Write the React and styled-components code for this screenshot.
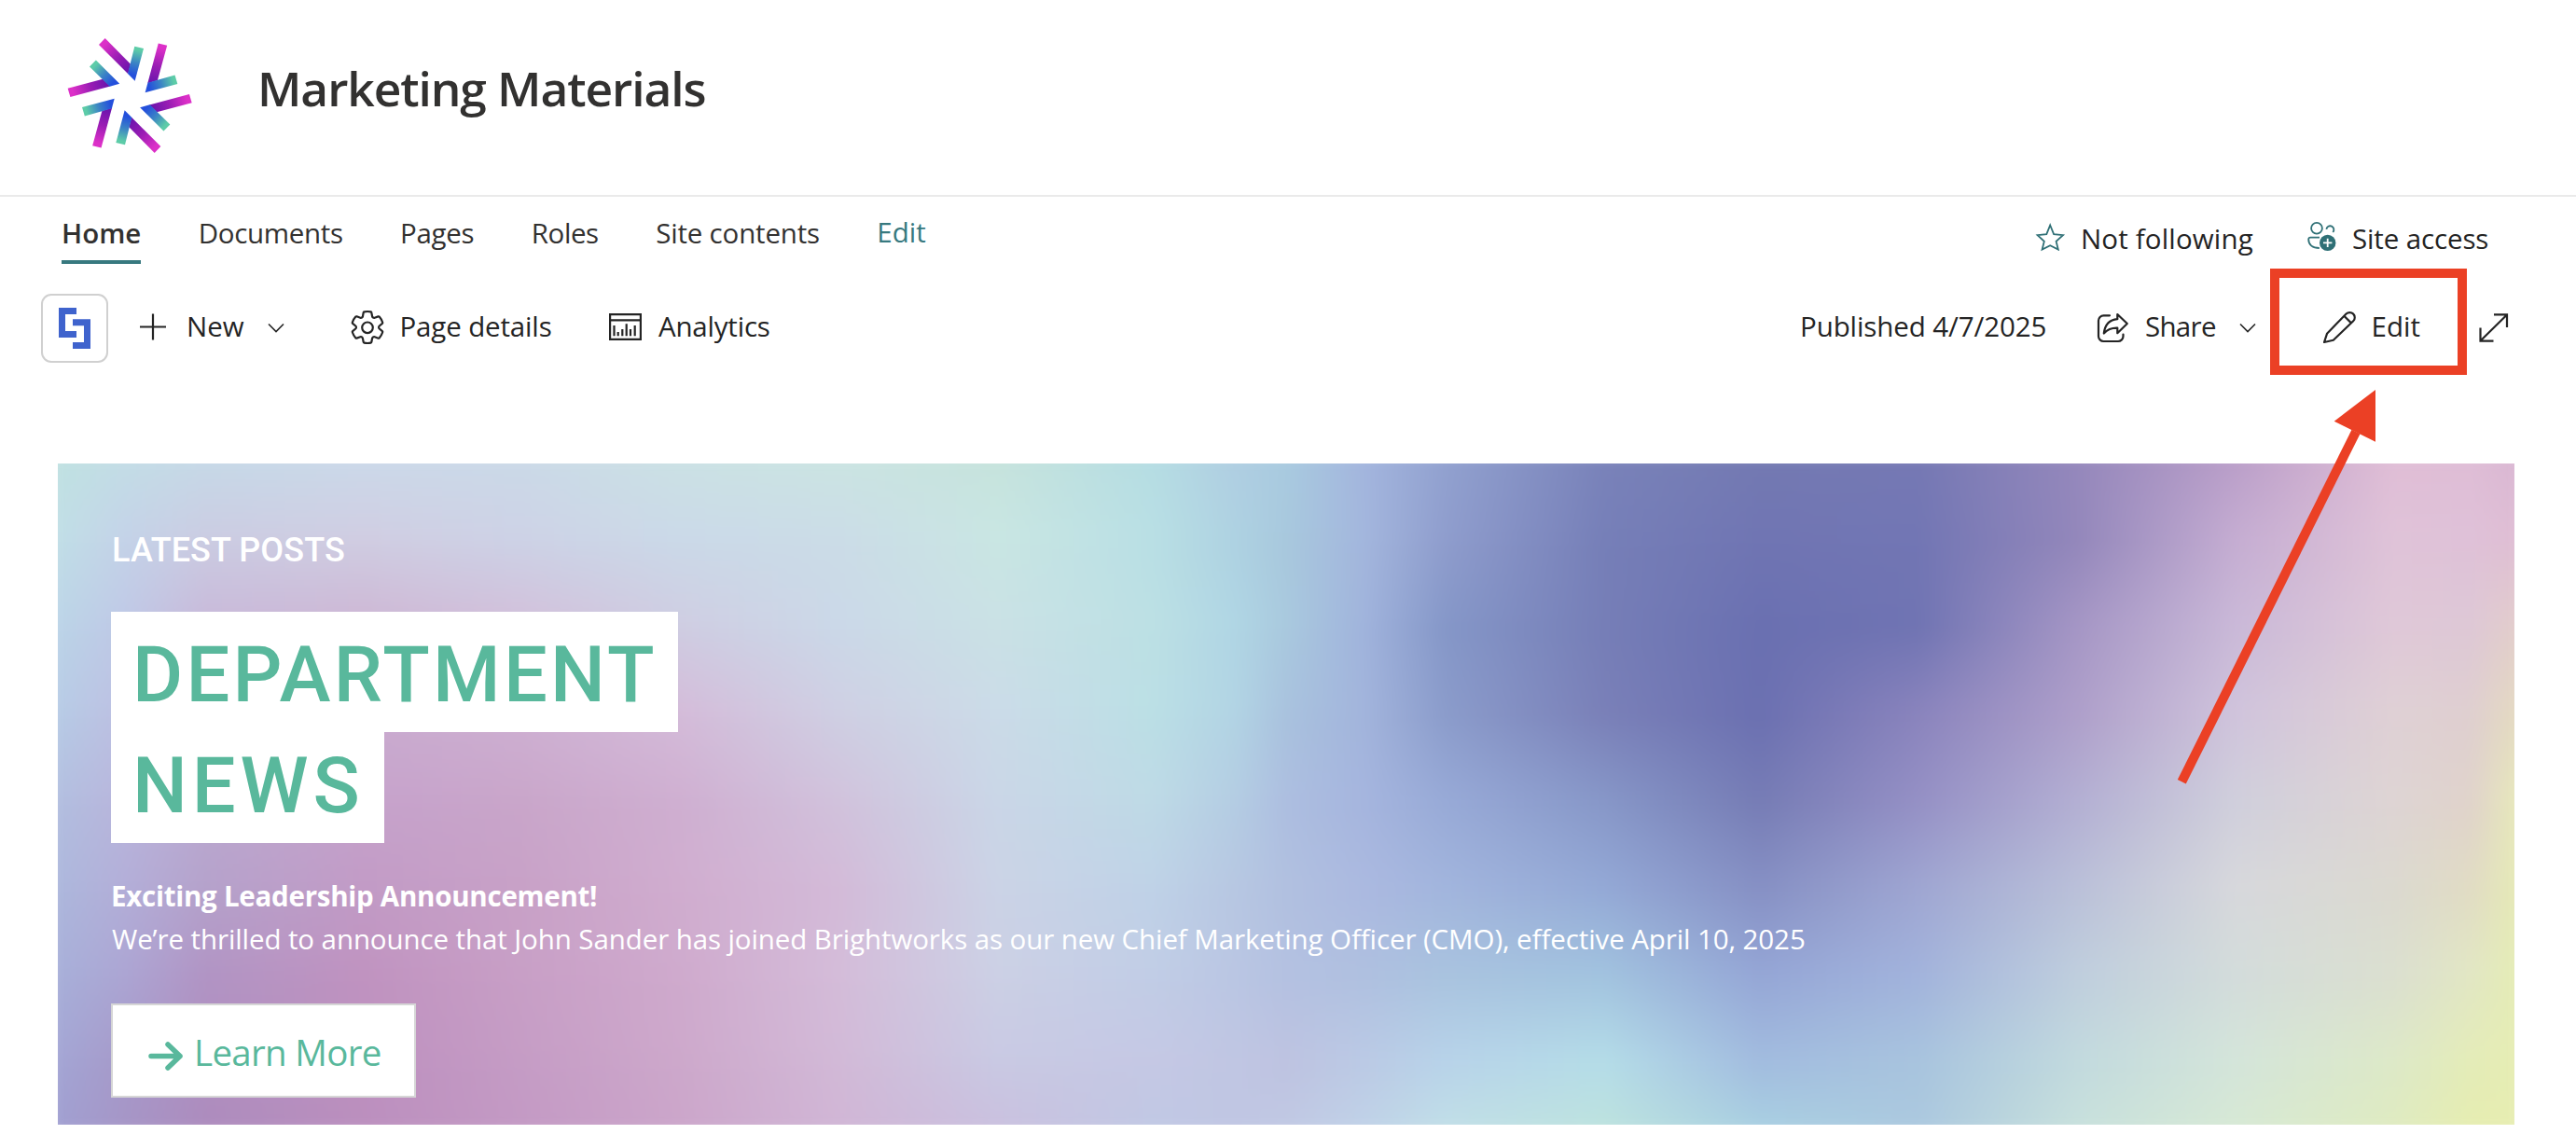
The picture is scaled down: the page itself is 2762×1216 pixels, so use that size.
import styled, { createGlobalStyle } from "styled-components";

const GlobalStyle = createGlobalStyle`
  * {
    box-sizing: border-box;
  }
  body {
    margin: 0;
    background-color: #fff;
    font-family: "Open Sans", "Noto Sans", sans-serif;
    color: #242424;
  }
`;

const red = "#eb4025";
const teal = "#2f7076";
const green = "#59b89c";

//--Page
const Page = styled.div`
  position: relative;
  width: 2762px;
  height: 1216px;
  overflow: hidden;
  background-color: #fff;
`;
//--Header with the logo and the site name
const Header = styled.header`
  height: 211px;
  display: flex;
  align-items: flex-start;
  padding: 20px 0 0 40px;
  border-bottom: 2px solid #eaeaea;
`;
const SiteTitle = styled.h1`
  margin: 38px 0 0 36px;
  font-size: 51.5px;
  line-height: 72px;
  font-weight: 600;
  letter-spacing: -1.1px;
  color: #323130;
`;
//--Navigation
const NavRow = styled.div`
  height: 104px;
  display: flex;
  align-items: flex-start;
  padding: 6px 0 0 66px;
`;
const Nav = styled.nav`
  display: flex;
  gap: 61.4px;
`;
const NavItem = styled.a`
  height: 66px;
  line-height: ${(props) => (props.$link ? "63px" : "65px")};
  font-size: 29.5px;
  font-weight: ${(props) => (props.$active ? 600 : 400)};
  letter-spacing: ${(props) => props.$track || 0}px;
  color: ${(props) => (props.$link ? "#37797f" : "#323130")};
  box-shadow: ${(props) => props.$active && "inset 0 -4px #37797f"};
  white-space: nowrap;
`;
const SiteActions = styled.div`
  width: 582px;
  height: 77px;
  margin-left: auto;
  display: flex;
`;
const SiteAction = styled.div`
  width: ${(props) => props.$width}px;
  display: flex;
  align-items: center;
  gap: 15px;
`;
const Label = styled.span`
  font-size: 29.5px;
  line-height: 40px;
  letter-spacing: ${(props) => props.$track || 0}px;
  white-space: nowrap;
`;
//--Command bar
const CommandBar = styled.div`
  height: 74px;
  display: flex;
  padding-left: 44px;
`;
const AppButton = styled.div`
  width: 72px;
  height: 74px;
  margin-right: 30px;
  border: 2px solid #d0d0d0;
  border-radius: 11px;
  display: flex;
  align-items: center;
  justify-content: center;
`;
const Command = styled.div`
  width: ${(props) => props.$width}px;
  flex-shrink: 0;
  display: flex;
  align-items: center;
  padding-left: ${(props) => props.$inset || 0}px;

  ${Label} {
    margin: -5px 0 0 ${(props) => props.$gap || 0}px;
  }
`;
const CommandsRight = styled.div`
  width: 832px;
  margin-left: auto;
  display: flex;
`;
const Svg = styled.svg`
  display: block;
  flex-shrink: 0;
  fill: none;
  stroke: ${(props) => props.$color || "#242424"};
  stroke-width: ${(props) => props.$stroke || 2.2}px;
  margin-left: ${(props) => props.$left || 0}px;
`;
//--Hero
const Hero = styled.section`
  position: relative;
  height: 709px;
  margin: 108px 66px 0 62px;
  overflow: hidden;
`;
const Backdrop = styled.div`
  position: absolute;
  inset: -12px;
  filter: blur(8px);
`;
// every layer fades in over the one before it
const Layer = styled.div`
  position: absolute;
  inset: 0;
  background-image: linear-gradient(to right, ${(props) => props.$stops});
  mask-image: ${(props) =>
    props.$to > 0 &&
    `linear-gradient(to bottom, transparent ${props.$from}%, #000 ${props.$to}%)`};
`;
const HeroContent = styled.div`
  position: relative;
  padding: 72px 0 0 57px;
  color: #fff;
`;
const Eyebrow = styled.div`
  padding-left: 1px;
  font-family: Roboto, sans-serif;
  font-size: 36px;
  line-height: 43px;
  font-weight: 500;
  letter-spacing: 0.1px;
`;
const HeroTitle = styled.h2`
  margin: 44px 0 0;
  font-family: Roboto, sans-serif;
  font-size: 83px;
  font-weight: 500;
  color: ${green};
`;
const TitleLine = styled.span`
  display: block;
  width: ${(props) => props.$width}px;
  height: ${(props) => props.$height}px;
  line-height: ${(props) => props.$line}px;
  letter-spacing: ${(props) => props.$track}px;
  padding-left: 23px;
  background-color: #fff;
`;
const Lead = styled.p`
  margin: 34px 0 0;
  font-size: 29.5px;
  line-height: 46px;
  font-weight: 700;
  letter-spacing: -0.26px;
`;
const Body = styled.p`
  margin: 0;
  padding-left: 1px;
  font-size: 29.5px;
  line-height: 46px;
  letter-spacing: -0.095px;
  white-space: nowrap;
`;
const LearnMore = styled.button`
  width: 327px;
  height: 101px;
  margin-top: 46px;
  padding: 3px 0 0 36px;
  display: flex;
  align-items: center;
  gap: 11px;
  background-color: #fff;
  border: 2px solid #d6d6d6;
  font-family: inherit;
  font-size: 38.5px;
  letter-spacing: -0.7px;
  color: ${green};
`;
//--Callout drawn over the page
const CalloutBox = styled.div`
  position: absolute;
  left: 2434px;
  top: 288px;
  width: 211px;
  height: 114px;
  border: 10px solid ${red};
`;
const CalloutArrow = styled.svg`
  position: absolute;
  left: 2330px;
  top: 410px;
`;

const stops = [0, 3.2, 6.4, 12.8, 19.1, 25.5, 31.9, 38.3, 44.6, 47.9, 50, 53.2, 56.4, 62.8, 69.1, 75.5, 81.9, 88.3, 94.6, 97.8, 100];
const rows = [
  [0, "bfe2e0 c3dee6 c6dae8 cbdaea cbdae8 cbe2e4 cbe5e2 c6e3dc b5dde3 b0cee2 a9cbe0 a3b5de 92a2d0 7a83ba 747ab2 7679b4 9588bc b99dc8 e0bdd6 dfbdd6 d8b5d2"],
  [12.8, "c0e0e6 c4d2e8 cbcce2 d0cde2 cdd2e6 cbd9e8 cbdce7 c9e6e3 b9dfe4 aed2e2 a8c8dd a3b6dd 8f9dcd 767fb8 7075b3 7276b4 9387bb c5add2 dfc3d8 dfc1d8 dfbdd3"],
  [25.5, "bbd6e8 bfc8e6 c8b8d9 cdb6d4 d2bfda cfcde2 cbd8e8 cae1e5 bce0e4 b0d6e4 a9c9de a0b3dc 8597c8 767eb7 6a70b1 7074b3 a596c5 cab9d8 dfc8d8 dec8d6 e3cec9"],
  [38.3, "b6cde6 bdbfe2 c3b2d6 c9abcf ceb0d2 d4bbd9 cfcfe3 cbdbe8 bbdfe5 b2d4e4 a9c2de a2b4dc 8b9ccb 7a80b8 6b70b1 8a84bd ae9fca d0c4dc dfd0d5 dfcfd0 e5dcbe"],
  [51, "b1c0e0 b9b5dc bba9d0 c6a2cb c9a6ca cfafd1 d1c2dc cad6e7 bedae6 b4cde3 adbee0 a5b5de 98aad7 8797c8 767cb5 9590c5 b3afd3 d0cfdc ded4d4 e0d3cb e8ecb8"],
  [63.8, "acb9dd b3aed8 b5a2cb c29bc6 c8a1c7 d0adcf d3bad8 cbd3e6 bfd2e7 b7c7e2 b1c0e0 abb9e0 a2b5dd 94a9d6 8690c4 9fa6d2 bac0d9 d7d8dc dbd9d0 e1dcc4 e6ecb4"],
  [76.5, "a7b1da aca5d3 b194c4 c093c0 c89fc6 cfaacd d4bcd9 ccd0e5 c1cde6 bac6e3 b4c1e1 afc0e0 a9c3df a2c3df 95a6d6 a2b3dc bfcedd d3dcdb dbdfd0 e2e7c4 e5edb3"],
  [89.3, "a3a7d6 a699c9 b08fc0 bd90bf c59cc5 cda8cb d2b9d7 c9c9e3 c5c8e4 c0c6e3 bec3e1 bbcae5 b8d3e9 b5dde8 a2bcdf a8c4de c2dade d4e5da dde9c8 e4ecb8 e6edb3"],
  [100, "9fa0d2 a695c6 ac8bbd bb8fbe c399c4 cba5ca d0b5d5 cabfde c0c8e4 c0c6e3 c1c9e4 c1d3e8 c2e0e7 bee3dd aad2e2 acc9df c8e1dc d7e9d4 dfebc0 e6edb0 e7edb2"],
];

function Mesh() {
  return (
    <Backdrop>
      {rows.map(([at, colors], i) => (
        <Layer
          key={at}
          $from={i > 0 ? rows[i - 1][0] : 0}
          $to={at}
          $stops={colors
            .split(" ")
            .map((c, n) => `#${c} ${stops[n]}%`)
            .join(", ")}
        />
      ))}
    </Backdrop>
  );
}

function Logo() {
  return (
    <svg width="200" height="160" viewBox="0 0 600 480">
      <defs>
        <linearGradient id="purple" gradientUnits="userSpaceOnUse" x1="208" y1="73" x2="300" y2="165">
          <stop offset="0.1" stopColor="#dc30c8" />
          <stop offset="0.55" stopColor="#9a1db4" />
          <stop offset="1" stopColor="#6a14ac" />
        </linearGradient>
        <linearGradient id="teal" gradientUnits="userSpaceOnUse" x1="328" y1="92" x2="304" y2="190">
          <stop offset="0.1" stopColor="#5dcca8" />
          <stop offset="0.5" stopColor="#3c86c4" />
          <stop offset="0.9" stopColor="#2450dc" />
        </linearGradient>
      </defs>
      {[0, 60, 120, 180, 240, 300].map((angle) => (
        <g key={angle} transform={`rotate(${angle} 297.5 247.5)`}>
          <path d="M218 63 300 146 292 178 198 84Z" fill="url(#purple)" />
          <path d="M313 89 342 96 314 200 291 177Z" fill="url(#teal)" />
        </g>
      ))}
    </svg>
  );
}

const Chevron = ({ left }) => (
  <Svg $left={left} $stroke={1.6} width="24" height="74" viewBox="0 0 24 74">
    <path d="M4 32.5 12 40.5 20 32.5" />
  </Svg>
);

function App() {
  return (
    <Page>
      <GlobalStyle />
      <Header>
        <Logo />
        <SiteTitle>Marketing Materials</SiteTitle>
      </Header>

      <NavRow>
        <Nav>
          <NavItem $active>Home</NavItem>
          <NavItem $track={-0.33}>Documents</NavItem>
          <NavItem $track={-0.3}>Pages</NavItem>
          <NavItem $track={-0.4}>Roles</NavItem>
          <NavItem $track={-0.18}>Site contents</NavItem>
          <NavItem $link>Edit</NavItem>
        </Nav>
        <SiteActions>
          <SiteAction $width={292}>
            <Svg $color={teal} $stroke={1.8} width="36" height="77" viewBox="0 0 36 77">
              <path d="M18.2 24.5 22.1 34.2 32 35.1 24.6 41.8 26.8 50.6 18.2 46.2 9.6 50.6 11.8 41.8 4.6 35.1 14.3 34.2Z" />
            </Svg>
            <Label $track={0.15}>Not following</Label>
          </SiteAction>
          <SiteAction $width={290}>
            <Svg $color={teal} $stroke={1.8} width="35" height="77" viewBox="0 0 35 77">
              <circle cx="12" cy="27.7" r="5.9" />
              <path d="M22.4 28.8A4 4 0 1 1 29.3 32" />
              <path d="M15 37.6H5.2a2 2 0 0 0-2 2c0 6 4.5 9.4 11.6 9.4" />
              <circle cx="23.7" cy="43.4" r="8.7" fill={teal} stroke="none" />
              <path d="M23.7 38.7v9.4M19 43.4h9.4" stroke="#fff" />
            </Svg>
            <Label $track={-0.13}>Site access</Label>
          </SiteAction>
        </SiteActions>
      </NavRow>

      <CommandBar>
        <AppButton>
          <svg width="34" height="44" viewBox="0 0 34 44" fill="#3f63cd">
            <path d="M0 0H19V7H7V25H19V32H0Z" />
            <path d="M15 12.3H34V44H15V37H27V19.3H15Z" />
          </svg>
        </AppButton>
        <Command $width={227.5} $gap={18}>
          <Svg width="36" height="74" viewBox="0 0 36 74">
            <path d="M18 21.5V49.5M4 35.5H32" />
          </Svg>
          <Label>New</Label>
          <Chevron left={22.5} />
        </Command>
        <Command $width={276.5} $gap={15}>
          <Svg $stroke={1.1} width="40" height="74" viewBox="0 -8.25 20 37">
            <path
              transform="translate(0 -0.25)"
              strokeLinejoin="round"
              d="M1.91 7.38A8.5 8.5 0 0 1 3.7 4.3a.5.5 0 0 1 .54-.13l1.92.68a1 1 0 0 0 1.32-.76l.36-2a.5.5 0 0 1 .4-.4 8.53 8.53 0 0 1 3.55 0c.2.04.35.2.38.4l.37 2a1 1 0 0 0 1.32.76l1.92-.68a.5.5 0 0 1 .54.13 8.5 8.5 0 0 1 1.78 3.08c.06.2 0 .4-.15.54l-1.56 1.32a1 1 0 0 0 0 1.52l1.56 1.32a.5.5 0 0 1 .15.54 8.5 8.5 0 0 1-1.78 3.08.5.5 0 0 1-.54.13l-1.92-.68a1 1 0 0 0-1.32.76l-.37 2a.5.5 0 0 1-.38.4 8.53 8.53 0 0 1-3.56 0 .5.5 0 0 1-.39-.4l-.36-2a1 1 0 0 0-1.32-.76l-1.92.68a.5.5 0 0 1-.54-.13 8.5 8.5 0 0 1-1.78-3.08.5.5 0 0 1 .15-.54l1.56-1.32a1 1 0 0 0 0-1.52L2.06 7.92a.5.5 0 0 1-.15-.54z"
            />
            <circle cx="10" cy="9.9" r="2.9" />
          </Svg>
          <Label $track={-0.15}>Page details</Label>
        </Command>
        <Command $width={260} $gap={14}>
          <Svg width="42" height="74" viewBox="0 0 42 74">
            <path d="M4.1 22.1H36.9V48.9H4.1ZM4 28.3H37" />
            <path d="M8.5 34V45.3M12.7 41V45.3M17.3 38V45.3M21.7 32.3V45.3M26 38V45.3M30.7 34V45.3" />
          </Svg>
          <Label $track={-0.2}>Analytics</Label>
        </Command>

        <CommandsRight>
          <Command $width={315}>
            <Label $track={-0.1}>Published 4/7/2025</Label>
          </Command>
          <Command $width={189} $gap={15}>
            <Svg width="40" height="74" viewBox="0 0 40 74" strokeLinejoin="round" strokeLinecap="round">
              <path d="M17 23.3H10.5a5.5 5.5 0 0 0-5.5 5.5V45.5a5.500 5.500 0 0 0 5.500 5.500H26a5.500 5.500 0 0 0 5.500-5.500V43.500" />
              <path d="M25.3 22 35.8 32 25.3 42.2V36.7C19 36.5 14.5 38.5 10.8 42.5 12 33 17.5 27.8 25.3 27.2Z" />
            </Svg>
            <Label $track={-0.7}>Share</Label>
            <Chevron left={22.5} />
          </Command>
          <Command $width={221} $inset={54} $gap={14.5}>
            <Svg width="40" height="74" viewBox="0 0 40 74" strokeLinejoin="round">
              <path d="M4 52 7 42.8 27.6 21.6a5.3 5.3 0 0 1 7.6 7.6L13.8 49.7Z" />
              <path d="M25.3 23.8 33 31.4" />
            </Svg>
            <Label>Edit</Label>
          </Command>
          <Command $width={60}>
            <Svg width="38" height="74" viewBox="0 0 38 74">
              <path d="M4.5 50.5 33 22.5M19 22.4H33V36M4.5 36.5V50.6H18.5" />
            </Svg>
          </Command>
        </CommandsRight>
      </CommandBar>

      <Hero>
        <Mesh />
        <HeroContent>
          <Eyebrow>LATEST POSTS</Eyebrow>
          <HeroTitle>
            <TitleLine $width={608} $height={129} $line={136} $track={3.2}>
              DEPARTMENT
            </TitleLine>
            <TitleLine $width={293} $height={119} $line={115} $track={4.9}>
              NEWS
            </TitleLine>
          </HeroTitle>
          <Lead>Exciting Leadership Announcement!</Lead>
          <Body>
            We’re thrilled to announce that John Sander has joined Brightworks as our new Chief
            Marketing Officer (CMO), effective April 10, 2025
          </Body>
          <LearnMore>
            <Svg
              $color={green}
              $stroke={5.5}
              width="40"
              height="40"
              viewBox="0 0 40 40"
              strokeLinecap="round"
              strokeLinejoin="round"
            >
              <path d="M5 24.500H36M23 12 36 24.500 23 37" />
            </Svg>
            Learn More
          </LearnMore>
        </HeroContent>
      </Hero>

      <CalloutBox />
      <CalloutArrow width="230" height="440" viewBox="0 0 230 440">
        <path d="M9.3 428.3 196 53" stroke={red} strokeWidth="10" fill="none" />
        <path d="M217 8V63.700L172.700 41.700Z" fill={red} />
      </CalloutArrow>
    </Page>
  );
}

export default App;
